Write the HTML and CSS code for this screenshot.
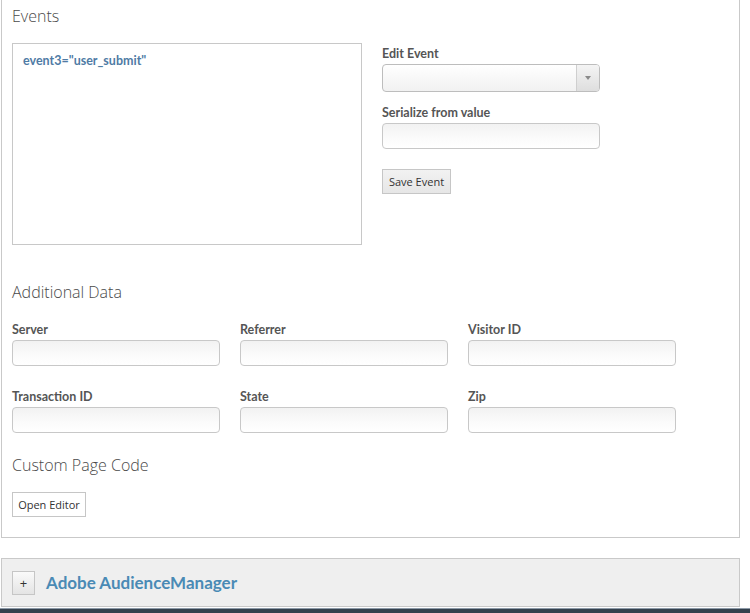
FILE: index.html
```html
<!DOCTYPE html>
<html>
<head>
<meta charset="utf-8">
<link rel="stylesheet" href="styles.css">
</head>
<body>
<div class="panel">
  <h2 class="heading">Events</h2>
  <div class="events-row">
    <div class="event-list">
      <div class="event-item">event3="user_submit"</div>
    </div>
    <div class="event-edit">
      <label class="label">Edit Event</label>
      <div class="select">
        <span class="select-value"></span>
        <span class="select-btn"><span class="arrow"></span></span>
      </div>
      <label class="label label-gap">Serialize from value</label>
      <div class="input"></div>
      <button class="btn btn-save">Save Event</button>
    </div>
  </div>

  <h2 class="heading heading-add">Additional Data</h2>
  <div class="grid">
    <div class="field"><label class="label">Server</label><div class="input"></div></div>
    <div class="field"><label class="label">Referrer</label><div class="input"></div></div>
    <div class="field"><label class="label">Visitor ID</label><div class="input"></div></div>
    <div class="field"><label class="label">Transaction ID</label><div class="input"></div></div>
    <div class="field"><label class="label">State</label><div class="input"></div></div>
    <div class="field"><label class="label">Zip</label><div class="input"></div></div>
  </div>

  <h2 class="heading heading-code">Custom Page Code</h2>
  <button class="btn btn-editor">Open Editor</button>
</div>

<div class="am-bar">
  <span class="plus">+</span>
  <span class="am-title">Adobe AudienceManager</span>
</div>
<div class="footer"></div>
</body>
</html>
```

FILE: styles.css
```css
html, body {
  margin: 0;
  padding: 0;
  background: #fff;
  overflow: hidden;
}
body {
  width: 750px;
  height: 613px;
  position: relative;
  font-family: Lato, "Open Sans", sans-serif;
  color: #555;
}
.panel {
  margin: -1px 0 0 1px;
  width: 739px;
  box-sizing: border-box;
  border: 1px solid #c9c9c9;
  padding: 6px 10px 20px 10px;
}
.heading {
  margin: 0;
  font-family: "Open Sans", Lato, sans-serif;
  font-weight: 300;
  font-size: 16px;
  line-height: 20px;
  color: #4a4a4a;
}
.events-row {
  display: flex;
  gap: 20px;
  margin-top: 17px;
}
.event-list {
  width: 350px;
  height: 202px;
  box-sizing: border-box;
  border: 1px solid #c8c8c8;
  padding: 9px 10px;
}
.event-item {
  font-weight: 700;
  font-size: 12.5px;
  line-height: 16px;
  color: #4f7ba5;
}
.event-edit {
  display: flex;
  flex-direction: column;
  align-items: flex-start;
  padding-top: 2px;
}
.label {
  display: block;
  font-weight: 700;
  font-size: 12.5px;
  line-height: 16px;
  color: #555;
  padding-top: 1px;
  margin-bottom: 2px;
}
.label-gap {
  margin-top: 12px;
}
.select {
  width: 218px;
  height: 28px;
  box-sizing: border-box;
  border: 1px solid #bdbdbd;
  border-radius: 4px;
  background: linear-gradient(#fff, #f1f1f1);
  display: flex;
  justify-content: flex-end;
  overflow: hidden;
}
.select-btn {
  width: 22px;
  height: 100%;
  border-left: 1px solid #cfcfcf;
  background: linear-gradient(#f4f4f4, #dedede);
  display: flex;
  align-items: center;
  justify-content: center;
}
.arrow {
  width: 0;
  height: 0;
  border-left: 3px solid transparent;
  border-right: 3px solid transparent;
  border-top: 4px solid #8a8a8a;
}
.input {
  width: 218px;
  height: 26px;
  box-sizing: border-box;
  border: 1px solid #c8c8c8;
  border-radius: 4px;
  background: linear-gradient(#f2f2f2, #fbfbfb 60%, #fff);
}
.btn {
  box-sizing: border-box;
  height: 25px;
  border: 1px solid #c6c6c6;
  font-family: "Open Sans", Lato, sans-serif;
  font-size: 11px;
  color: #333;
  padding: 0;
  margin: 0;
}
.btn-save {
  width: 69px;
  margin-top: 20px;
  background: linear-gradient(#f2f2f2, #e6e6e6);
}
.heading-add {
  margin-top: 37px;
}
.grid {
  display: grid;
  grid-template-columns: repeat(3, 208px);
  column-gap: 20px;
  row-gap: 22px;
  margin-top: 19px;
}
.grid .input {
  width: 208px;
}
.heading-code {
  margin-top: 22px;
}
.btn-editor {
  width: 74px;
  margin-top: 17px;
  background: #fff;
  display: block;
}
.am-bar {
  margin: 20px 0 0 1px;
  width: 739px;
  height: 49px;
  box-sizing: border-box;
  border: 1px solid #c9c9c9;
  background: #efefef;
  display: flex;
  align-items: center;
  padding-left: 10px;
}
.plus {
  width: 23px;
  height: 24px;
  box-sizing: border-box;
  border: 1px solid #c6c6c6;
  background: linear-gradient(#fafafa, #e4e4e4);
  display: flex;
  align-items: center;
  justify-content: center;
  font-family: "Open Sans", sans-serif;
  font-size: 13px;
  color: #333;
  margin-top: 1px;
}
.am-title {
  margin-left: 11px;
  font-weight: 700;
  font-size: 17px;
  color: #4a8ab5;
}
.footer {
  margin-top: 1px;
  height: 6px;
  border-top: 1px solid #8d9aa8;
  background: #34404d;
}
```
